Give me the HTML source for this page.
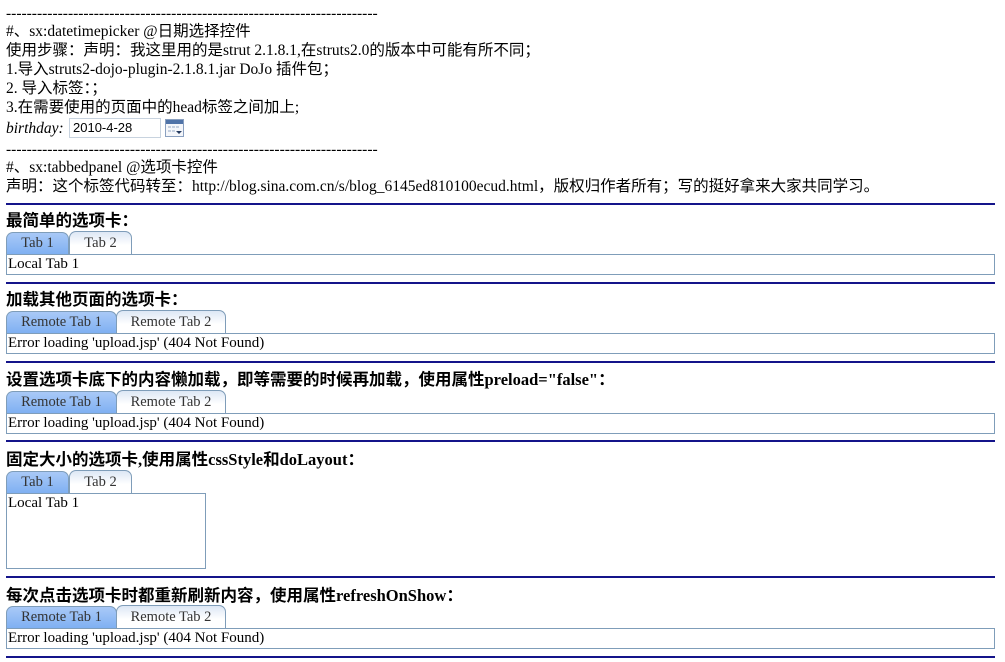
<!DOCTYPE html>
<html><head><meta charset="utf-8"><style>
body{margin:0;width:1005px;height:662px;overflow:hidden;background:#fff;position:relative;font-family:"Liberation Serif","Noto Sans CJK SC",serif;font-size:15.5px;color:#000}
.a{position:absolute;white-space:nowrap;line-height:19px}
.hr{position:absolute;left:6px;width:989px;height:2px;background:#14148a}
.h{font-weight:bold;font-size:16.5px}
.box{position:absolute;left:6px;border:1px solid #7f9db9;background:#fff;box-sizing:border-box;line-height:19px;padding-left:1px;font-size:15px}
.tab{position:absolute;height:22px;box-sizing:border-box;border:1px solid #7f9db9;border-bottom:none;border-radius:7px 7px 0 0;text-align:center;line-height:21px;color:#333;font-size:14.5px}
.t1{background:linear-gradient(#a9c9f7,#7fb0f2)}
.t2{background:linear-gradient(#dde7f5,#fff 60%);height:23px;z-index:2;line-height:23px}
</style></head><body>
<div class="a" style="left:6px;top:4px">------------------------------------------------------------------------</div>
<div class="a" style="left:6px;top:22px">#、sx:datetimepicker @日期选择控件</div>
<div class="a" style="left:6px;top:41px">使用步骤：声明：我这里用的是strut 2.1.8.1,在struts2.0的版本中可能有所不同；</div>
<div class="a" style="left:6px;top:60px">1.导入struts2-dojo-plugin-2.1.8.1.jar DoJo 插件包；</div>
<div class="a" style="left:6px;top:79px">2. 导入标签：；</div>
<div class="a" style="left:6px;top:98px">3.在需要使用的页面中的head标签之间加上;</div>
<div class="a" style="left:6px;top:119px;font-style:italic">birthday:</div>
<div style="position:absolute;left:69px;top:118px;width:92px;height:20px;border:1px solid #c8d3df;box-sizing:border-box;font-family:'Liberation Sans',sans-serif;font-size:13px;line-height:18px;padding-left:3px">2010-4-28</div>
<svg style="position:absolute;left:165px;top:119px" width="19" height="18" viewBox="0 0 19 18"><rect x="0.5" y="0.5" width="18" height="17" fill="#f4f6fa" stroke="#8aa0c0"/><rect x="1" y="1" width="17" height="4" fill="#4f73a8"/><g fill="#c4cfdf"><rect x="3" y="7" width="3" height="2"/><rect x="7" y="7" width="3" height="2"/><rect x="11" y="7" width="3" height="2"/><rect x="3" y="11" width="3" height="2"/><rect x="7" y="11" width="3" height="2"/></g><path d="M11 12h6l-3 3z" fill="#23395f"/></svg>
<div class="a" style="left:6px;top:140px">------------------------------------------------------------------------</div>
<div class="a" style="left:6px;top:158px">#、sx:tabbedpanel @选项卡控件</div>
<div class="a" style="left:6px;top:177px">声明：这个标签代码转至：http://blog.sina.com.cn/s/blog_6145ed810100ecud.html，版权归作者所有；写的挺好拿来大家共同学习。</div>

<div class="hr" style="top:203px"></div>
<div class="a h" style="left:6px;top:211px">最简单的选项卡：</div>
<div class="tab t1" style="left:6px;top:232px;width:63px">Tab 1</div>
<div class="tab t2" style="left:69px;top:231px;width:63px">Tab 2</div>
<div class="box" style="top:254px;width:989px;height:21px">Local Tab 1</div>

<div class="hr" style="top:282px"></div>
<div class="a h" style="left:6px;top:290px">加载其他页面的选项卡：</div>
<div class="tab t1" style="left:6px;top:311px;width:111px">Remote Tab 1</div>
<div class="tab t2" style="left:116px;top:310px;width:110px">Remote Tab 2</div>
<div class="box" style="top:333px;width:989px;height:21px">Error loading 'upload.jsp' (404 Not Found)</div>

<div class="hr" style="top:361px"></div>
<div class="a h" style="left:6px;top:370px">设置选项卡底下的内容懒加载，即等需要的时候再加载，使用属性preload="false"：</div>
<div class="tab t1" style="left:6px;top:391px;width:111px">Remote Tab 1</div>
<div class="tab t2" style="left:116px;top:390px;width:110px">Remote Tab 2</div>
<div class="box" style="top:413px;width:989px;height:21px">Error loading 'upload.jsp' (404 Not Found)</div>

<div class="hr" style="top:440px"></div>
<div class="a h" style="left:6px;top:450px">固定大小的选项卡,使用属性cssStyle和doLayout：</div>
<div class="tab t1" style="left:6px;top:471px;width:63px">Tab 1</div>
<div class="tab t2" style="left:69px;top:470px;width:63px">Tab 2</div>
<div class="box" style="top:493px;width:200px;height:76px">Local Tab 1</div>

<div class="hr" style="top:576px"></div>
<div class="a h" style="left:6px;top:586px">每次点击选项卡时都重新刷新内容，使用属性refreshOnShow：</div>
<div class="tab t1" style="left:6px;top:606px;width:111px">Remote Tab 1</div>
<div class="tab t2" style="left:116px;top:605px;width:110px">Remote Tab 2</div>
<div class="box" style="top:628px;width:989px;height:21px">Error loading 'upload.jsp' (404 Not Found)</div>

<div class="hr" style="top:656px"></div>
</body></html>
